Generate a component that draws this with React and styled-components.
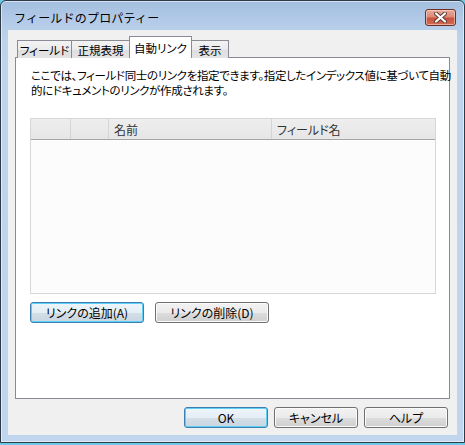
import * as React from "react"
import styled, { createGlobalStyle, css } from "styled-components"

const uiFont = `"Noto Sans CJK JP", "Noto Sans", sans-serif`

const GlobalStyle = createGlobalStyle`
  html, body {
    margin: 0;
    padding: 0;
    background: #6ccbe6;
  }
  body {
    font-family: ${uiFont};
    font-size: 12px;
    color: #000;
  }
`

const tabs = [
  { label: "フィールド", width: 55 },
  { label: "正規表現", width: 59 },
  { label: "自動リンク", width: 63, active: true },
  { label: "表示", width: 38 },
]

const columns = [
  { label: "", width: 40 },
  { label: "", width: 38 },
  { label: "名前", width: 163 },
  { label: "フィールド名", width: 163 },
]

const CloseGlyph = () => (
  <svg width="13" height="11" viewBox="0 0 13 11">
    <path
      d="M2 1.5 L11 9.5 M11 1.5 L2 9.5"
      stroke="#5b3a34"
      strokeWidth="4"
      strokeLinecap="round"
    />
    <path
      d="M2 1.5 L11 9.5 M11 1.5 L2 9.5"
      stroke="#ffffff"
      strokeWidth="2.2"
      strokeLinecap="round"
    />
  </svg>
)

const App = () => (
  <>
    <GlobalStyle />
    <Window>
      <TitleBar>
        <Title>フィールドのプロパティー</Title>
        <CloseButton aria-label="閉じる">
          <CloseGlyph />
        </CloseButton>
      </TitleBar>
      <Client>
        <TabStrip>
          {tabs.map(tab => (
            <Tab key={tab.label} $width={tab.width} $active={tab.active}>
              {tab.label}
            </Tab>
          ))}
        </TabStrip>
        <Panel>
          <Description>
            <Line>
              ここでは、フィールド同士のリンクを指定できます。指定したインデックス値に基づいて自動
            </Line>
            <Line>的にドキュメントのリンクが作成されます。</Line>
          </Description>
          <ListView>
            <ListHeader>
              {columns.map((col, i) => (
                <HeaderCell key={i} $width={col.width}>
                  {col.label}
                </HeaderCell>
              ))}
            </ListHeader>
            <ListBody />
          </ListView>
          <ActionRow>
            <Button $width={114} $focused>
              リンクの追加(A)
            </Button>
            <Button $width={114}>リンクの削除(D)</Button>
          </ActionRow>
        </Panel>
        <Footer>
          <Button $width={84} $focused>
            OK
          </Button>
          <Button $width={84}>キャンセル</Button>
          <Button $width={84}>ヘルプ</Button>
        </Footer>
      </Client>
    </Window>
  </>
)

const Window = styled.div`
  box-sizing: border-box;
  width: 465px;
  height: 443px;
  display: flex;
  flex-direction: column;
  padding: 0 7px 7px 7px;
  border: 1px solid #2e3a46;
  border-radius: 6px 6px 0 0;
  background: linear-gradient(
    to bottom,
    #a3bedf 0px,
    #b3cbe8 20px,
    #bed4ec 40px,
    #c0d6ee 100%
  );
  box-shadow: inset 0 0 0 1px rgba(255, 255, 255, 0.55);
`

const TitleBar = styled.div`
  height: 29px;
  display: flex;
  align-items: center;
  justify-content: space-between;
  padding: 4px 1px 0 6px;
  box-sizing: border-box;
`

const Title = styled.span`
  font-size: 12px;
  letter-spacing: 0.2px;
  color: #000;
`

const CloseButton = styled.button`
  width: 31px;
  height: 17px;
  padding: 0;
  display: flex;
  align-items: center;
  justify-content: center;
  border: 1px solid #6b2f25;
  border-radius: 3px;
  background: linear-gradient(
    to bottom,
    #e9a99b 0%,
    #dc8a78 45%,
    #c7533d 55%,
    #d26c52 100%
  );
  box-shadow: inset 0 0 0 1px rgba(255, 225, 215, 0.55);
`

const Client = styled.div`
  flex: 1;
  display: flex;
  flex-direction: column;
  background: #f0f0f0;
  padding: 6px 6px 0 7px;
`

const TabStrip = styled.div`
  display: flex;
  align-items: flex-end;
  padding-left: 2px;
  height: 22px;
  position: relative;
  z-index: 1;
  margin-bottom: -1px;
`

const Tab = styled.div`
  box-sizing: border-box;
  width: ${p => p.$width}px;
  height: 18px;
  display: flex;
  align-items: center;
  justify-content: center;
  font-size: 11.5px;
  font-feature-settings: "palt";
  border: 1px solid #898c95;
  border-bottom: none;
  margin-right: -1px;
  background: linear-gradient(to bottom, #f3f3f3 0%, #ebebeb 50%, #dedede 51%, #e4e4e4 100%);
  ${p =>
    p.$active &&
    css`
      height: 22px;
      padding-top: 1px;
      background: #fff;
      margin: 0 -1px 0 0;
      position: relative;
      z-index: 2;
    `}
`

const Panel = styled.div`
  box-sizing: border-box;
  height: 342px;
  margin-right: 1px;
  border: 1px solid #898c95;
  background: #fff;
  padding: 10px 13px 0 14px;
  display: flex;
  flex-direction: column;
`

const Description = styled.div`
  margin: 0 0 0 1px;
  display: flex;
  flex-direction: column;
`

const Line = styled.span`
  display: block;
  height: 15px;
  line-height: 15px;
  font-size: 11.5px;
  white-space: nowrap;
  font-feature-settings: "palt";
  letter-spacing: -0.35px;
`

const ListView = styled.div`
  box-sizing: border-box;
  width: 406px;
  height: 176px;
  margin-top: 20px;
  border: 1px solid #d6d6d6;
  background: #fcfcfc;
  display: flex;
  flex-direction: column;
`

const ListHeader = styled.div`
  display: flex;
  height: 20px;
  border-bottom: 1px solid #a5a5a5;
  background: linear-gradient(to bottom, #eeeeee 0%, #e6e6e6 100%);
`

const HeaderCell = styled.div`
  box-sizing: border-box;
  width: ${p => p.$width}px;
  display: flex;
  align-items: center;
  padding-left: 5px;
  color: #333;
  font-feature-settings: "palt";
  border-right: 1px solid #d5d5d5;
  &:last-child {
    flex: 1;
    border-right: none;
  }
`

const ListBody = styled.div`
  flex: 1;
`

const ActionRow = styled.div`
  display: flex;
  gap: 11px;
  margin-top: 8px;
`

const Button = styled.button`
  box-sizing: border-box;
  width: ${p => p.$width}px;
  height: 21px;
  padding: 0;
  font-family: ${uiFont};
  font-size: 12px;
  font-feature-settings: "palt";
  color: #000;
  border: 1px solid #707070;
  border-radius: 3px;
  background: linear-gradient(
    to bottom,
    #f2f2f2 0%,
    #ebebeb 50%,
    #dddddd 51%,
    #cfcfcf 100%
  );
  box-shadow: inset 0 0 0 1px #fbfbfb;
  ${p =>
    p.$focused &&
    css`
      border-color: #3c7fb1;
      box-shadow: inset 0 0 0 1px #5fd0f5;
      background: linear-gradient(
        to bottom,
        #eef6fb 0%,
        #e4eef5 50%,
        #d4dfe7 51%,
        #c9d6e0 100%
      );
    `}
`

const Footer = styled.div`
  display: flex;
  justify-content: flex-end;
  gap: 6px;
  padding: 8px 3px 0 0;
`

export default App
